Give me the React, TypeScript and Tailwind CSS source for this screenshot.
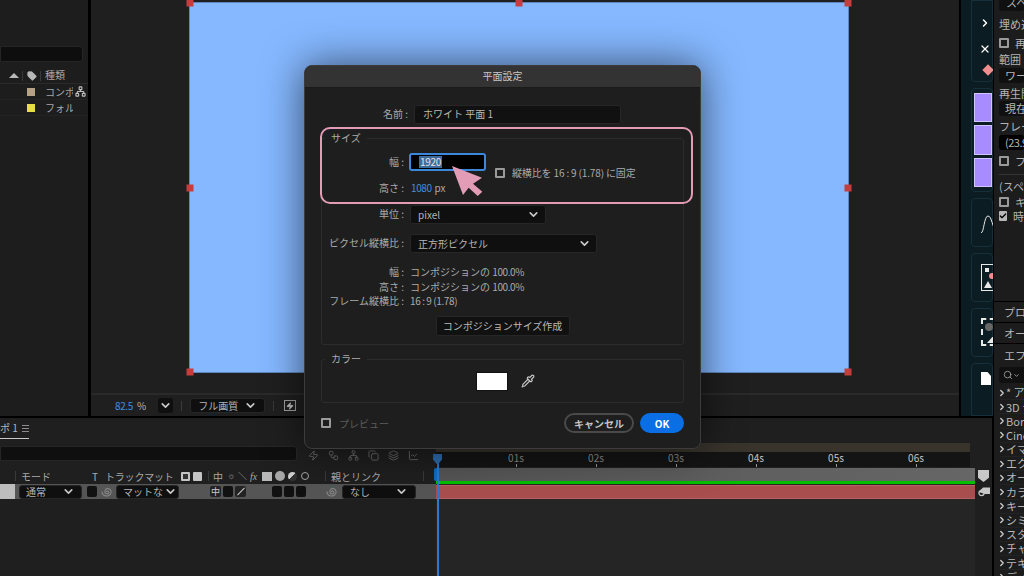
import { ChartLine, Check, ChevronDown, ChevronRight, Copy, Layers, Network, Pipette, Search, Tag, Workflow, X, Zap } from "lucide-react";

const handles = [
  "left-0 top-0",
  "left-1/2 top-0",
  "left-full top-0",
  "left-0 top-1/2",
  "left-full top-1/2",
  "left-0 top-full",
  "left-1/2 top-full",
  "left-full top-full",
];

const effects = ["* アニ", "3D テ", "Bori", "Cine", "イマ", "エク", "オー", "カラ", "キー", "シミ", "スタ", "チャ", "テキ", "ディ"];
const ticks = ["01s", "02s", "03s", "04s", "05s", "06s"];
const hiddenIcons = [Zap, Workflow, Network, Copy, Layers, ChartLine];

function Chevron({ size = 13 }: { size?: number }) {
  return <ChevronDown size={size} strokeWidth={3} className="text-[#c8c8c8] shrink-0" />;
}

function Select({ label, className }: { label: string; className: string }) {
  return (
    <div className={`flex items-center justify-between rounded-[3px] bg-[#0f0f0f] border border-[#262626] text-[10px] text-[#b4b4b4] whitespace-nowrap ${className}`}>
      <span>{label}</span>
      <Chevron />
    </div>
  );
}

function Box({ className = "" }: { className?: string }) {
  return <div className={`w-[10px] h-[10px] rounded-[1px] border-2 border-[#9a9a9a] shrink-0 ${className}`} />;
}

function Spiral({ className = "" }: { className?: string }) {
  return (
    <svg viewBox="0 0 12 12" className={`w-[11px] h-[11px] shrink-0 ${className}`} fill="none" stroke="#8c8c8c" strokeWidth="1.1">
      <path d="M6 6.5a1 1 0 0 1 1-1 1.6 1.6 0 0 1 0 3.2A2.8 2.8 0 0 1 4.2 6 3.2 3.2 0 0 1 7.5 2.8 3.9 3.9 0 0 1 11 6.6 4.6 4.6 0 0 1 6.2 11 5 5 0 0 1 1 6" />
    </svg>
  );
}

function DarkSquare() {
  return <div className="w-[10px] h-[11px] rounded-[2px] bg-[#111] shrink-0" />;
}

function Sep() {
  return <div className="w-px h-[10px] bg-[#3a3a3a] shrink-0" />;
}

function ProjectPanel() {
  return (
    <div className="w-[88px] shrink-0 bg-[#1d1d1d] pt-[46px] text-[10px] text-[#a8a8a8]">
      <div className="h-[16px] mr-[5px] rounded-r-[3px] bg-[#0e0e0e] border border-[#262626]" />
      <div className="mt-[6px] h-[16px] flex items-center border-b border-[#2a2a2a] pl-[9px]">
        <div className="w-0 h-0 border-x-[5px] border-x-transparent border-b-[5px] border-b-[#b8b8b8]" />
        <div className="ml-[3px]"><Sep /></div>
        <Tag size={10} fill="#b8b8b8" stroke="#b8b8b8" className="ml-[4px]" />
        <div className="ml-[3px]"><Sep /></div>
        <span className="ml-[4px] pb-[2px]">種類</span>
      </div>
      <div className="h-[16px] flex items-center pl-[27px] border-b border-[#232323] relative">
        <div className="w-[8px] h-[8px] bg-[#b5a184]" />
        <span className="ml-[10px] w-[28px] overflow-hidden whitespace-nowrap">コンポジ</span>
        <Network size={11} strokeWidth={2.4} className="absolute left-[75px] top-[2px] text-[#c0c0c0]" />
      </div>
      <div className="h-[16px] flex items-center pl-[27px] border-b border-[#232323]">
        <div className="w-[8px] h-[8px] bg-[#e8dd45]" />
        <span className="ml-[10px] w-[28px] overflow-hidden whitespace-nowrap">フォルダ</span>
      </div>
    </div>
  );
}

function Viewer() {
  return (
    <div className="flex-1 ml-[3px] bg-[#1f1f1f] flex flex-col">
      <div className="flex-1 pt-[2px] pl-[98px]">
        <div className="relative w-[660px] h-[371px] bg-[#85b8ff] border border-[#5f86bd]">
          {handles.map((h) => (
            <div key={h} className={`absolute ${h} w-[7px] h-[7px] -translate-x-1/2 -translate-y-1/2 bg-[#c73c3c]`} />
          ))}
        </div>
      </div>
      <div className="h-[23px] border-t-2 border-[#2a2a2a] flex items-center pl-[24px] text-[10px] text-[#b4b4b4]">
        <span className="text-[#3f8fe0] tracking-[-0.4px] w-[17px]">82.5</span>
        <span className="ml-[5px]">%</span>
        <div className="ml-[12px] w-[15px] h-[15px] rounded-[3px] bg-[#0f0f0f] flex items-center justify-center"><Chevron /></div>
        <div className="ml-[8px]"><Sep /></div>
        <Select label="フル画質" className="ml-[8px] w-[75px] h-[15px] px-[7px]" />
        <div className="ml-[8px]"><Sep /></div>
        <div className="ml-[10px] w-[12px] h-[11px] border border-[#a0a0a0] flex items-center justify-center">
          <Zap size={8} fill="#c0c0c0" stroke="#c0c0c0" />
        </div>
      </div>
    </div>
  );
}

function Toolbar() {
  return (
    <div className="w-[32px] ml-[2px] shrink-0 bg-[#0b1c22] pl-[10px] flex flex-col gap-[6px] overflow-hidden">
      <div className="h-[82px] shrink-0 rounded-b-[4px] border border-[#15303a] pl-[7px] pt-[16px] flex flex-col text-white">
        <ChevronRight size={12} strokeWidth={3} />
        <X size={12} strokeWidth={2.5} className="mt-[14px]" />
        <div className="mt-[11px] ml-[5px] w-[8px] h-[8px] rotate-45 bg-[#f08d8d]" />
      </div>
      <div className="h-[104px] shrink-0 rounded-[4px] border border-[#15303a] pl-[2px] py-[4px] flex flex-col gap-[3px]">
        <div className="flex-1 bg-[#a68cff] border border-[#d2c4ff]" />
        <div className="flex-1 bg-[#a68cff] border border-[#d2c4ff]" />
        <div className="flex-1 bg-[#a68cff] border border-[#d2c4ff]" />
      </div>
      <div className="h-[49px] shrink-0 rounded-[4px] border border-[#15303a] pl-[9px] pt-[16px]">
        <svg viewBox="0 0 16 18" className="w-[16px] h-[18px]" fill="none" stroke="#e8e8e8" strokeWidth="1">
          <path d="M0 18C3 18 3 1 7 1s4 12 9 16" />
        </svg>
      </div>
      <div className="h-[49px] shrink-0 rounded-[4px] border border-[#15303a] pl-[9px] pt-[10px]">
        <div className="relative w-[20px] h-[27px] border border-[#e8e8e8]">
          <div className="absolute left-[3px] top-[3px] w-[4px] h-[4px] bg-[#e8e8e8]" />
          <div className="absolute left-[7px] top-[8px] w-[6px] h-[6px] rounded-full bg-[#f08d8d]" />
          <div className="absolute left-[2px] bottom-[2px] w-0 h-0 border-x-[4px] border-x-transparent border-b-[7px] border-b-[#e8e8e8]" />
        </div>
      </div>
      <div className="h-[49px] shrink-0 rounded-[4px] border border-[#15303a] pl-[9px] pt-[9px]">
        <div className="relative w-[14px] h-[28px] border-2 border-dashed border-[#e8e8e8]">
          <div className="absolute left-[2px] top-[3px] w-[8px] h-[8px] rounded-full bg-[#666]" />
          <div className="absolute left-[4px] bottom-[1px] w-0 h-0 border-l-[8px] border-l-transparent border-b-[9px] border-b-[#e8e8e8]" />
        </div>
      </div>
      <div className="flex-1 rounded-t-[4px] border border-[#15303a] pl-[9px] pt-[8px]">
        <div className="w-[10px] h-[13px] bg-white [clip-path:polygon(0_0,65%_0,100%_30%,100%_100%,0_100%)]" />
      </div>
    </div>
  );
}

function RightPanel() {
  const text = "text-[11px] leading-[14px] text-[#b4b4b4] whitespace-nowrap";
  return (
    <div className="w-[30px] ml-[1px] shrink-0 flex flex-col overflow-hidden">
      <div className="h-[302px] shrink-0 bg-[#1c1c1c] pl-[5px] border-b border-black">
        <div className="h-[12px] rounded-[3px] bg-[#101010] pl-[7px] -mt-[1px] leading-[6px] text-[11px] text-[#b4b4b4] whitespace-nowrap overflow-hidden">スペ</div>
        <div className={`mt-[6px] ${text}`}>埋め込</div>
        <div className={`mt-[5px] flex items-center gap-[6px] ${text}`}><Box />再</div>
        <div className={`mt-[2px] ${text}`}>範囲</div>
        <div className={`mt-[2px] h-[15px] rounded-[3px] bg-[#101010] pl-[6px] ${text}`}>ワー</div>
        <div className={`mt-[3px] ${text}`}>再生開</div>
        <div className={`mt-[1px] h-[15px] rounded-[3px] bg-[#101010] pl-[6px] ${text}`}>現在</div>
        <div className={`mt-[3px] ${text}`}>フレー</div>
        <div className={`mt-[2px] h-[15px] rounded-[3px] bg-black pl-[6px] tracking-[-0.5px] ${text}`}>(23.9</div>
        <div className={`mt-[4px] flex items-center gap-[6px] ${text}`}><Box />フ</div>
        <div className="mt-[6px] h-px bg-[#333]" />
        <div className={`mt-[4px] ${text}`}>(スペー</div>
        <div className={`mt-[2px] flex items-center gap-[6px] ${text}`}><Box />キ</div>
        <div className={`flex items-center gap-[6px] ${text}`}>
          <div className="w-[10px] h-[10px] rounded-[1px] bg-[#b8b8b8] flex items-center justify-center"><Check size={8} strokeWidth={4} className="text-black" /></div>
          時
        </div>
      </div>
      <div className={`h-[21px] shrink-0 bg-[#1c1c1c] border-b border-black pl-[10px] flex items-center ${text}`}>プロ</div>
      <div className={`h-[21px] shrink-0 bg-[#1c1c1c] border-b border-black pl-[10px] flex items-center ${text}`}>オー</div>
      <div className="flex-1 bg-[#1c1c1c] pl-[5px]">
        <div className={`h-[22px] flex items-center pl-[5px] ${text}`}>エフ</div>
        <div className="mt-px h-[16px] rounded-l-[3px] bg-[#101010] pl-[4px] flex items-center text-[#a0a0a0]">
          <Search size={10} />
          <ChevronDown size={7} strokeWidth={3} />
        </div>
        <div className="mt-[3px] flex flex-col">
          {effects.map((e) => (
            <div key={e} className="h-[14.2px] shrink-0 flex items-center text-[11px] text-[#b8b8b8] whitespace-nowrap border-b border-[#232323]">
              <ChevronRight size={10} strokeWidth={3} className="shrink-0 -ml-[2px] mr-[-1px] text-[#d0d0d0]" />
              {e}
            </div>
          ))}
        </div>
      </div>
    </div>
  );
}

function LayerHeader() {
  return (
    <div className="h-[16px] flex items-center text-[10px] text-[#a8a8a8] whitespace-nowrap">
      <div className="ml-[15px]"><Sep /></div>
      <span className="ml-[5px] w-[71px]">モード</span>
      <span className="w-[13px]">T</span>
      <span className="w-[76px] tracking-[-0.2px]">トラックマット</span>
      <div className="w-[9px] h-[9px] bg-[#c4c4c4] border-2 border-[#c4c4c4] rounded-[1px] flex"><div className="flex-1 bg-[#333]" /></div>
      <div className="ml-[3px] w-[9px] h-[9px] bg-[#c4c4c4] rounded-[1px]" />
      <div className="ml-[6px]"><Sep /></div>
      <span className="ml-[4px] w-[14px]">中</span>
      <span className="w-[11px] text-[9px]">☼</span>
      <span className="w-[12px] text-[9px]">＼</span>
      <span className="w-[12px] italic font-['Liberation_Serif',serif]">fx</span>
      <div className="w-[10px] h-[9px] bg-[#b8b8b8] mr-[3px]" />
      <div className="w-[10px] h-[10px] rounded-full bg-[#a8a8a8] mr-[3px]" />
      <div className="w-[9px] h-[9px] rounded-full bg-[linear-gradient(135deg,#d0d0d0_50%,#333_50%)] mr-[4px]" />
      <div className="w-[8px] h-[8px] rounded-full border border-[#a8a8a8]" />
      <div className="ml-[16px]"><Sep /></div>
      <span className="ml-[5px] w-[92px]">親とリンク</span>
      <Sep />
    </div>
  );
}

function LayerRow() {
  return (
    <div className="h-[15px] bg-[#555] flex items-center">
      <div className="w-[15px] h-full bg-[#bdbdbd] shrink-0" />
      <Select label="通常" className="ml-[4px] w-[63px] h-[14px] px-[6px] shrink-0" />
      <div className="ml-[5px]"><DarkSquare /></div>
      <Spiral className="ml-[4px]" />
      <Select label="マットな" className="ml-[4px] w-[63px] h-[14px] pl-[6px] pr-[1px] shrink-0" />
      <div className="ml-[31px] w-[11px] h-[11px] rounded-[2px] bg-[#222] text-[9px] leading-[11px] text-center text-[#ccc]">中</div>
      <div className="ml-[2px]"><DarkSquare /></div>
      <div className="ml-[2px] w-[11px] h-[11px] rounded-[2px] bg-[#222] flex items-center justify-center">
        <div className="w-[10px] h-px bg-[#ccc] -rotate-45" />
      </div>
      <div className="ml-[26px] flex gap-[2px]">
        <DarkSquare />
        <DarkSquare />
        <DarkSquare />
      </div>
      <Spiral className="ml-[20px]" />
      <Select label="なし" className="ml-[5px] w-[74px] h-[14px] px-[7px] shrink-0" />
    </div>
  );
}

function Timeline() {
  return (
    <div className="flex-1 mt-[2px] mr-[1px] bg-[#1f1f1f] flex flex-col relative">
      <div className="h-[28px] flex items-start">
        <div className="mt-[3px] h-[18px] w-[29px] border-b border-[#c8c8c8] text-[10px] leading-[14px] text-[#b8b8b8] whitespace-nowrap text-right pr-[16px] overflow-hidden">ポ 1</div>
        <div className="ml-[-7px] mt-[7px] w-[7px] h-[7px] border-y border-[#8c8c8c] flex items-center"><div className="w-full h-px bg-[#8c8c8c]" /></div>
      </div>
      <div className="h-[15px] w-[297px] rounded-r-[3px] bg-[#0f0f0f] border border-[#262626]" />
      <div className="flex-1 flex mt-[7px]">
        <div className="w-[436px] shrink-0 flex flex-col">
          <LayerHeader />
          <LayerRow />
        </div>
        <div className="flex-1 flex relative">
          <div className="flex-1 bg-[#252525]">
            <div className="h-[13px] bg-[linear-gradient(90deg,#555,#666)]" />
            <div className="h-[3px] bg-[#00c000]" />
            <div className="mt-px h-[14px] bg-[#a84e4e] border-y border-[#b86060]" />
          </div>
          <div className="w-[17px] shrink-0 pt-[2px] pl-[3px]">
            <div className="w-[11px] h-[12px] bg-[#c8c8c8] [clip-path:polygon(0_0,100%_0,100%_65%,50%_100%,0_65%)]" />
            <svg viewBox="0 0 12 10" className="mt-[5px] w-[12px] h-[10px]">
              <circle cx="3.5" cy="6" r="2.6" fill="none" stroke="#c8c8c8" strokeWidth="1.2" />
              <path d="M0.5 5 5 0.5h7v6.5H7z" fill="#c8c8c8" />
            </svg>
          </div>
          <div className="absolute -top-[25px] left-0 right-[22px] h-[9px] bg-[#38342c]" />
          <div className="absolute -top-[16px] left-0 right-[22px] h-[15px] bg-[#141414] flex text-[10px] text-[#8c8c8c]">
            <div className="w-[80px] shrink-0" />
            {ticks.map((t, i) => (
              <div key={t} className={`w-[80px] shrink-0 -translate-x-[10px] leading-[12px] ${i > 2 ? "text-[#c4c4c4]" : ""}`}>
                <div className="w-[20px] text-center">{t}</div>
                <div className="mx-[10px] w-px h-[3px] bg-[#999]" />
              </div>
            ))}
          </div>
        </div>
      </div>
      {/* playhead */}
      <div className="absolute left-[434px] top-[50px] w-[4px] h-[13px] rounded-l-[2px] bg-[#0a6ec8]" />
      <div className="absolute left-[437px] top-[36px] bottom-0 w-[2px] bg-[#2a78d0]" />
      <div className="absolute left-[433px] top-[36px] w-[9px] h-[11px] bg-[#2d6cb0] [clip-path:polygon(0_0,100%_0,100%_50%,50%_100%,0_50%)]" />
      {/* icons that show under the dialog */}
      <div className="absolute left-[308px] top-[32px] flex gap-[9px]">
        {hiddenIcons.map((Icon, n) => (
          <Icon key={n} size={11} className="text-[#6a6a6a]" />
        ))}
      </div>
    </div>
  );
}

function PlaneDialog() {
  const label = "text-[10px] text-[#ababab] whitespace-nowrap pb-[2px]";
  const num = "tracking-[-0.4px]";
  return (
    <div className="absolute left-[304px] top-[65px] w-[397px] h-[384px] rounded-[8px] bg-[#1e1e1e] border border-[#3c3c3c] shadow-[0_0_40px_rgba(0,0,0,0.6)] overflow-hidden">
      <div className="h-[22px] pb-[2px] bg-[#333] border-b border-[#1a1a1a] flex items-center justify-center text-[10px] text-[#c8c8c8]">平面設定</div>

      <div className="mt-[17px] flex items-center h-[19px]">
        <div className={`w-[103px] text-right ${label}`}>名前 :</div>
        <div className="ml-[6px] w-[207px] h-[19px] rounded-[3px] bg-[#111] border border-[#262626] pl-[8px] text-[10px] leading-[16px] text-[#b8b8b8]">ホワイト 平面 1</div>
      </div>

      <div className="relative mt-[14px] mx-[16px] h-[207px] rounded-[3px] border border-[#2c2c2c]">
        <div className={`absolute left-[3px] -top-[9px] bg-[#1e1e1e] px-[6px] ${label}`}>サイズ</div>
        <div className="mt-[14px] flex">
          <div className="w-[316px] shrink-0">
            <div className="flex items-center h-[18px]">
              <div className={`w-[82px] text-right ${label}`}>幅 :</div>
              <div className="ml-[5px] w-[77px] h-[18px] rounded-[3px] border-2 border-[#3c86dc] bg-black pl-[8px] pb-px flex items-center">
                <span className="bg-[#3f6a9e] px-px text-[10px] leading-[12px] text-[#e4e4e4] tracking-[-0.3px]">1920</span>
              </div>
            </div>
            <div className="mt-[9px] flex items-center h-[16px]">
              <div className={`w-[82px] text-right ${label}`}>高さ :</div>
              <div className="ml-[7px] text-[10px] pb-[2px]">
                <span className={`text-[#3f8fe0] ${num}`}>1080</span>
                <span className="ml-[3px] text-[#ababab]">px</span>
              </div>
            </div>
          </div>
        </div>
        <div className="absolute left-[173px] top-[26px] flex items-center gap-[7px] text-[10px] text-[#ababab] whitespace-nowrap">
          <Box />
          <span className="tracking-[-0.15px]">縦横比を 16 : 9 (1.78) に固定</span>
        </div>

        <div className="mt-[9px] flex items-center h-[19px]">
          <div className={`w-[82px] text-right ${label}`}>単位 :</div>
          <Select label="pixel" className="ml-[6px] w-[136px] h-[19px] pl-[7px] pr-[5px]" />
        </div>
        <div className="mt-[10px] flex items-center h-[19px]">
          <div className={`w-[82px] text-right ${label}`}>ピクセル縦横比 :</div>
          <Select label="正方形ピクセル" className="ml-[6px] w-[187px] h-[19px] pl-[7px] pr-[5px]" />
        </div>
        <div className="mt-[12px] flex flex-col text-[10px] leading-[14.5px] text-[#ababab] whitespace-nowrap">
          <div className="flex"><div className="w-[82px] text-right">幅 :</div><span className="ml-[6px]">コンポジションの <span className={num}>100.0%</span></span></div>
          <div className="flex"><div className="w-[82px] text-right">高さ :</div><span className="ml-[6px]">コンポジションの <span className={num}>100.0%</span></span></div>
          <div className="flex"><div className="w-[82px] text-right">フレーム縦横比 :</div><span className={`ml-[6px] ${num}`}>16 : 9 (1.78)</span></div>
        </div>
        <div className="mt-[7px] mx-auto w-[134px] h-[20px] rounded-[3px] bg-[#111] border border-[#262626] flex items-center justify-center text-[10px] text-[#b8b8b8]">コンポジションサイズ作成</div>
      </div>

      <div className="relative mt-[14px] mx-[16px] h-[44px] rounded-[3px] border border-[#2c2c2c] flex items-center pl-[155px]">
        <div className={`absolute left-[3px] -top-[9px] bg-[#1e1e1e] px-[6px] ${label}`}>カラー</div>
        <div className="w-[30px] h-[17px] bg-white outline outline-1 outline-[#111]" />
        <Pipette size={14} className="ml-[14px] text-[#c4c4c4]" />
      </div>

      <div className="mt-[10px] mx-[16px] flex items-center h-[20px]">
        <Box className="border-[#6a6a6a]" />
        <span className="ml-[8px] text-[10px] text-[#5c5c5c]">プレビュー</span>
        <div className="ml-auto w-[70px] h-[20px] rounded-full border-2 border-[#4a4a4a] flex items-center justify-center text-[10px] font-bold text-[#c4c4c4]">キャンセル</div>
        <div className="ml-[6px] w-[44px] h-[20px] rounded-full bg-[#0a6ee4] flex items-center justify-center text-[10px] font-bold text-white">OK</div>
      </div>

      {/* pink highlight */}
      <div className="absolute left-[15px] top-[61px] w-[373px] h-[77px] rounded-[10px] border-2 border-[#e39cb6]" />
      <svg viewBox="455 315 96 96" className="absolute left-[147px] top-[100px] w-[32px] h-[32px]">
        <polygon points="455,315 545,350 518,368 546,392 532,405 505,380 488,402" fill="#e39cb6" />
      </svg>
    </div>
  );
}

export default function App() {
  return (
    <div className="relative w-[1024px] h-[576px] overflow-hidden bg-black flex font-['Noto_Sans_CJK_JP','Noto_Sans',sans-serif]">
      <div className="w-[993px] shrink-0 flex flex-col">
        <div className="h-[416px] shrink-0 flex">
          <ProjectPanel />
          <Viewer />
          <Toolbar />
        </div>
        <Timeline />
      </div>
      <RightPanel />
      <PlaneDialog />
    </div>
  );
}
